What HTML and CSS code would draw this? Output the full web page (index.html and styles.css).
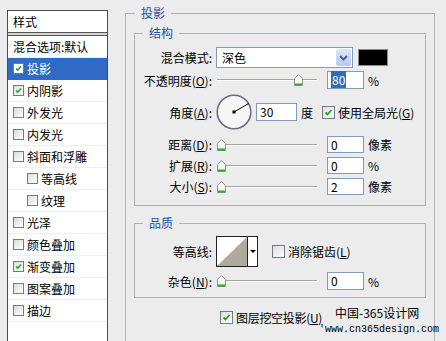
FILE: index.html
```html
<!DOCTYPE html>
<html lang="zh-CN">
<head>
    <meta charset="UTF-8">
    <meta name="viewport" content="width=device-width, initial-scale=1.0">
    <title>图层样式 - 投影</title>
    <link rel="stylesheet" href="styles.css">
</head>
<body>
    <!-- 左侧样式列表 -->
    <div class="style-list">
        <div class="list-head">样式</div>
        <div class="list-sep"></div>
        <div class="item">混合选项:默认</div>
        <div class="item selected"><span class="box checked"><svg viewBox="0 0 11 11"><path d="M2.5 5.5l2 2 4-4.5"/></svg></span>投影</div>
        <div class="item"><span class="box checked"><svg viewBox="0 0 11 11"><path d="M2.5 5.5l2 2 4-4.5"/></svg></span>内阴影</div>
        <div class="item"><span class="box"></span>外发光</div>
        <div class="item"><span class="box"></span>内发光</div>
        <div class="item"><span class="box"></span>斜面和浮雕</div>
        <div class="item sub"><span class="box"></span>等高线</div>
        <div class="item sub"><span class="box"></span>纹理</div>
        <div class="item"><span class="box"></span>光泽</div>
        <div class="item"><span class="box"></span>颜色叠加</div>
        <div class="item"><span class="box checked"><svg viewBox="0 0 11 11"><path d="M2.5 5.5l2 2 4-4.5"/></svg></span>渐变叠加</div>
        <div class="item"><span class="box"></span>图案叠加</div>
        <div class="item"><span class="box"></span>描边</div>
    </div>

    <div class="panel">
        <fieldset class="group outer">
            <legend>投影</legend>

            <fieldset class="group inner">
                <legend>结构</legend>

                <div class="row row-blend">
                    <span class="lbl">混合模式:</span>
                    <div class="select">
                        <span class="select-text">深色</span>
                        <span class="select-btn"><svg width="11" height="8" viewBox="0 0 11 8"><path d="M2 2l3.5 3.5L9 2"/></svg></span>
                    </div>
                    <span class="swatch"></span>
                </div>

                <div class="row row-opacity">
                    <span class="lbl">不透明度(<u>O</u>):</span>
                    <div class="slider"><span class="thumb" style="left: 77px"><svg width="9" height="12" viewBox="0 0 9 12"><path class="thumb-body" d="M0.5 4.5L4.5 0.5L8.5 4.5V11.5H0.5Z"/><path class="thumb-base" d="M1 10.5H8"/></svg></span></div>
                    <span class="field"><span class="selected-text">80</span></span>
                    <span class="unit">%</span>
                </div>

                <div class="row row-angle">
                    <span class="lbl">角度(<u>A</u>):</span>
                    <svg class="dial" width="36" height="36" viewBox="0 0 36 36">
                        <circle cx="18" cy="18" r="16.8"/>
                        <line x1="18" y1="18" x2="32.5" y2="9.6"/>
                        <rect x="16.5" y="16.5" width="3" height="3"/>
                    </svg>
                    <span class="field wide">30</span>
                    <span class="unit">度</span>
                    <span class="box lg checked global"><svg viewBox="0 0 11 11"><path d="M2.5 5.5l2 2 4-4.5"/></svg></span>
                    <span class="box-text">使用全局光(<u>G</u>)</span>
                </div>

                <div class="row row-small first">
                    <span class="lbl">距离(<u>D</u>):</span>
                    <div class="slider"><span class="thumb" style="left: 0px"><svg width="9" height="12" viewBox="0 0 9 12"><path class="thumb-body" d="M0.5 4.5L4.5 0.5L8.5 4.5V11.5H0.5Z"/><path class="thumb-base" d="M1 10.5H8"/></svg></span></div>
                    <span class="field short">0</span>
                    <span class="unit">像素</span>
                </div>

                <div class="row row-small">
                    <span class="lbl">扩展(<u>R</u>):</span>
                    <div class="slider"><span class="thumb" style="left: 0px"><svg width="9" height="12" viewBox="0 0 9 12"><path class="thumb-body" d="M0.5 4.5L4.5 0.5L8.5 4.5V11.5H0.5Z"/><path class="thumb-base" d="M1 10.5H8"/></svg></span></div>
                    <span class="field short">0</span>
                    <span class="unit">%</span>
                </div>

                <div class="row row-small">
                    <span class="lbl">大小(<u>S</u>):</span>
                    <div class="slider"><span class="thumb" style="left: 0px"><svg width="9" height="12" viewBox="0 0 9 12"><path class="thumb-body" d="M0.5 4.5L4.5 0.5L8.5 4.5V11.5H0.5Z"/><path class="thumb-base" d="M1 10.5H8"/></svg></span></div>
                    <span class="field short">2</span>
                    <span class="unit">像素</span>
                </div>
            </fieldset>

            <fieldset class="group quality">
                <legend>品质</legend>

                <div class="row row-contour">
                    <span class="lbl">等高线:</span>
                    <div class="contour">
                        <svg class="contour-preview" width="30" height="29" viewBox="0 0 30 29"><path d="M0 29L30 0V29Z"/></svg>
                        <span class="contour-arrow"></span>
                    </div>
                    <span class="box lg antialias"></span>
                    <span class="box-text">消除锯齿(<u>L</u>)</span>
                </div>

                <div class="row row-noise">
                    <span class="lbl">杂色(<u>N</u>):</span>
                    <div class="slider"><span class="thumb" style="left: 0px"><svg width="9" height="12" viewBox="0 0 9 12"><path class="thumb-body" d="M0.5 4.5L4.5 0.5L8.5 4.5V11.5H0.5Z"/><path class="thumb-base" d="M1 10.5H8"/></svg></span></div>
                    <span class="field">0</span>
                    <span class="unit">%</span>
                </div>
            </fieldset>

            <div class="row row-knockout">
                <span class="box lg checked"><svg viewBox="0 0 11 11"><path d="M2.5 5.5l2 2 4-4.5"/></svg></span>
                <span class="box-text">图层挖空投影(<u>U</u>)</span>
            </div>
        </fieldset>
    </div>

    <!-- 水印 -->
    <div class="watermark">
        <div class="wm-name">中国-365设计网</div>
        <div class="wm-url">'www.cn365design.com</div>
    </div>
</body>
</html>
```

FILE: styles.css
```css
body {
    margin: 0;
    height: 341px;
    overflow: hidden;
    position: relative;
    display: flex;
    align-items: flex-start;
    background-color: #ececec;
    font-family: "Noto Sans CJK SC", sans-serif;
    font-size: 12px;
    color: #000;
}
u {
    text-decoration-thickness: 1px;
    text-underline-offset: 1px;
}

/* 左侧样式列表 */
.style-list {
    margin: 10px 0 0 7px;
    width: 101px;
    height: 340px;
    box-sizing: border-box;
    border: 1px solid #4a4a4a;
    background-color: #fff;
}
.list-head {
    height: 21px;
    line-height: 21px;
    padding-left: 5px;
    border-bottom: 1px solid #555;
}
.list-sep {
    height: 2px;
    background-color: #d4d4d4;
    border-bottom: 1px solid #555;
}
.item {
    display: flex;
    align-items: center;
    height: 21px;
    padding-left: 5px;
    border-bottom: 1px solid #efefef;
    white-space: nowrap;
}
.item.selected {
    background-color: #316ac5;
    border-bottom-color: #316ac5;
    color: #fff;
}
.item.sub {
    padding-left: 19px;
}
.item .box {
    margin-right: 3px;
}

/* 复选框 */
.box {
    display: inline-flex;
    flex-shrink: 0;
    width: 11px;
    height: 11px;
    box-sizing: border-box;
    border: 1px solid #6e7c8c;
    background: linear-gradient(135deg, #dcdcd7, #fff);
}
.box.lg {
    width: 13px;
    height: 13px;
}
.item.selected .box {
    background: #fff;
}
.box svg {
    width: 100%;
    height: 100%;
}
.box path {
    fill: none;
    stroke: #21a121;
    stroke-width: 1.8;
}
.box-text {
    margin-left: 3px;
    white-space: nowrap;
}

/* 右侧面板 */
.panel {
    margin-left: 17px;
    width: 310px;
}
.group {
    margin: 0;
    min-width: 0;
    border: 1px solid #b2b2b2;
}
.group legend {
    padding: 0 6px;
    line-height: 16px;
    color: #1c4fae;
}
.outer {
    margin-top: 5px;
    height: 345px;
    box-sizing: border-box;
    padding: 4px 8px 0;
}
.outer > legend {
    margin-left: 1px;
}
.inner {
    padding: 6px 0 10px;
}
.inner legend,
.quality legend {
    margin-left: 8px;
}
.quality {
    margin-top: 9px;
    padding: 5px 0 7px;
}

.row {
    display: flex;
    align-items: center;
}
.lbl {
    flex-shrink: 0;
    width: 77px;
    margin-right: 4px;
    text-align: right;
    white-space: nowrap;
}
.row-blend { height: 21px; }
.row-opacity { height: 20px; margin-top: 2px; }
.row-angle { height: 36px; margin-top: 4px; }
.row-small { height: 17px; margin-top: 4px; }
.row-small.first { margin-top: 6px; }
.row-contour { height: 31px; }
.row-noise { height: 18px; margin-top: 5px; }
.row-knockout {
    height: 13px;
    margin-top: 13px;
    padding-left: 86px;
}
.row-knockout .box-text {
    line-height: 14px;
    letter-spacing: -0.3px;
}

/* 下拉框 */
.select {
    display: flex;
    width: 137px;
    height: 21px;
    box-sizing: border-box;
    border: 1px solid #7f9db9;
    background-color: #fff;
    margin-right: 5px;
}
.select-text {
    flex: 1;
    padding-left: 5px;
    line-height: 19px;
}
.select-btn {
    width: 15px;
    margin: 1px;
    border-radius: 2px;
    background: linear-gradient(#dbe6fc, #b5c9f3);
    display: flex;
    align-items: center;
    justify-content: center;
}
.select-btn path {
    fill: none;
    stroke: #4d6185;
    stroke-width: 2;
}
.swatch {
    width: 30px;
    height: 17px;
    box-sizing: border-box;
    border: 1px solid #8c8c8c;
    background-color: #000;
}

/* 滑块 */
.slider {
    position: relative;
    flex-shrink: 0;
    width: 100px;
    height: 14px;
    margin-left: 1px;
    margin-right: 10px;
}
.slider::before {
    content: "";
    position: absolute;
    left: 0;
    right: 0;
    top: 6px;
    height: 1px;
    background-color: #a3a3a3;
    border-bottom: 1px solid #fff;
}
.thumb {
    position: absolute;
    top: 1px;
    display: flex;
}
.thumb-body {
    fill: #f4f8f2;
    stroke: #8d978d;
}
.thumb-base {
    stroke: #3aa23a;
    stroke-width: 2;
}

/* 输入框 */
.field {
    flex-shrink: 0;
    width: 37px;
    height: 18px;
    box-sizing: border-box;
    border: 1px solid #7f9db9;
    background-color: #fff;
    padding-left: 3px;
    line-height: 16px;
}
.field.short {
    height: 17px;
    line-height: 15px;
}
.field.wide {
    width: 41px;
}
.selected-text {
    background-color: #316ac5;
    color: #fff;
    padding: 0 1px;
}
.unit {
    margin-left: 4px;
    white-space: nowrap;
}

/* 角度盘 */
.dial {
    flex-shrink: 0;
    margin-right: 4px;
}
.dial circle {
    fill: #f6f6f4;
    stroke: #6c6f80;
    stroke-width: 1.6;
}
.dial line {
    stroke: #000;
    stroke-width: 1;
}
.dial rect {
    fill: #000;
}
.global {
    margin-left: 9px;
}

/* 等高线 */
.contour {
    display: flex;
    width: 42px;
    height: 31px;
    box-sizing: border-box;
    border: 1px solid #222;
    background-color: #fff;
}
.contour-preview path {
    fill: #aeaa9e;
}
.contour-arrow {
    flex: 1;
    border-left: 1px solid #222;
    display: flex;
    align-items: center;
    justify-content: center;
}
.contour-arrow::after {
    content: "";
    border-left: 3px solid transparent;
    border-right: 3px solid transparent;
    border-top: 3px solid #000;
}
.antialias {
    margin-left: 14px;
}

/* 水印 */
.watermark {
    position: absolute;
    left: 319px;
    top: 305px;
}
.wm-name {
    margin-left: 16px;
    font-size: 12px;
    line-height: 15px;
}
.wm-url {
    margin-top: 4px;
    font-family: "Liberation Mono", monospace;
    font-size: 10px;
    line-height: 12px;
}
```
